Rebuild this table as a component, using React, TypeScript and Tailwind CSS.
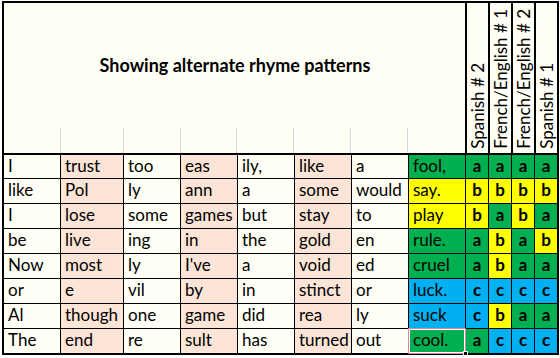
import React from "react";

const rows: string[][] = [
  ["I", "trust", "too", "eas", "ily,", "like", "a", "fool,", "aaaa"],
  ["like", "Pol", "ly", "ann", "a", "some", "would", "say.", "bbbb"],
  ["I", "lose", "some", "games", "but", "stay", "to", "play", "baba"],
  ["be", "live", "ing", "in", "the", "gold", "en", "rule.", "abab"],
  ["Now", "most", "ly", "I've", "a", "void", "ed", "cruel", "abaa"],
  ["or", "e", "vil", "by", "in", "stinct", "or", "luck.", "cccc"],
  ["Al", "though", "one", "game", "did", "rea", "ly", "suck", "cbaa"],
  ["The", "end", "re", "sult", "has", "turned", "out", "cool.", "accc"],
];

// rhyme word colour per row
const wordFill = ["a", "b", "b", "a", "a", "c", "c", "a"];

const fill: Record<string, string> = {
  a: "bg-[#00B050]",
  b: "bg-[#FFFF00]",
  c: "bg-[#00B0F0]",
};

const colW = [
  "w-[57px]",
  "w-[63px]",
  "w-[57px]",
  "w-[57px]",
  "w-[57px]",
  "w-[57px]",
  "w-[57px]",
  "w-[57px]",
];

const peach = [false, true, false, true, false, true, false, false];

const labels = ["Spanish # 2", "French/English # 1", "French/English # 2", "Spanish # 1"];

const rowH = ["h-[24px]", "h-[25px]", "h-[25px]", "h-[25px]", "h-[25px]", "h-[25px]", "h-[25px]", "h-[24px]"];

export default function App() {
  return (
    <div className="w-[560px] h-[358px] bg-white overflow-hidden font-['Lato',sans-serif] text-black">
      <div className="ml-[2px] mt-[1px] w-[557px] border-2 border-black bg-[#FFFFF5]">
        {/* header */}
        <div className="flex h-[152px] border-b-2 border-black">
          <div className="w-[461px] flex flex-col">
            <div className="h-[125px] flex items-center justify-center pl-[1px]">
              <span className="font-bold text-[18px]">Showing alternate rhyme patterns</span>
            </div>
            <div className="flex h-[25px]">
              {colW.map((w, i) => (
                <div key={i} className={`${w} h-full ${i < 7 ? "border-r border-[#D0D7E5]" : ""}`} />
              ))}
            </div>
          </div>
          {labels.map((l) => (
            <div key={l} className="w-[23px] border-l-2 border-black flex items-end justify-center pb-[4px] overflow-visible">
              <span className="[writing-mode:vertical-rl] rotate-180 text-[17px] leading-[21px] whitespace-nowrap">{l}</span>
            </div>
          ))}
        </div>

        {/* body */}
        {rows.map((r, ri) => (
          <div key={ri} className={`flex ${rowH[ri]} ${ri < 7 ? "border-b border-black" : ""}`}>
            {r.slice(0, 7).map((t, ci) => (
              <div
                key={ci}
                className={`${colW[ci]} border-r border-black pl-[4px] text-[17px] leading-[22px] whitespace-nowrap overflow-hidden ${peach[ci] ? "bg-[#FCE4D6]" : ""}`}
              >
                {t}
              </div>
            ))}
            <div className={`relative w-[57px] border-r border-black pl-[4px] text-[17px] leading-[22px] whitespace-nowrap ${fill[wordFill[ri]]}`}>
              {r[7]}
              {ri === 7 && (
                <>
                  <div className="absolute inset-[-1px] right-[-1px] border border-[#E87C9A]">
                    <div className="w-full h-full border border-white" />
                  </div>
                  <div className="absolute right-[-3px] bottom-[-3px] w-[5px] h-[5px] bg-black border border-white" />
                </>
              )}
            </div>
            {r[8].split("").map((c, li) => (
              <div
                key={li}
                className={`${li < 3 ? "w-[23px] border-r border-black" : "w-[22px]"} ${fill[c]} flex justify-center font-bold text-[17px] leading-[22px]`}
              >
                {c}
              </div>
            ))}
          </div>
        ))}
      </div>
    </div>
  );
}
